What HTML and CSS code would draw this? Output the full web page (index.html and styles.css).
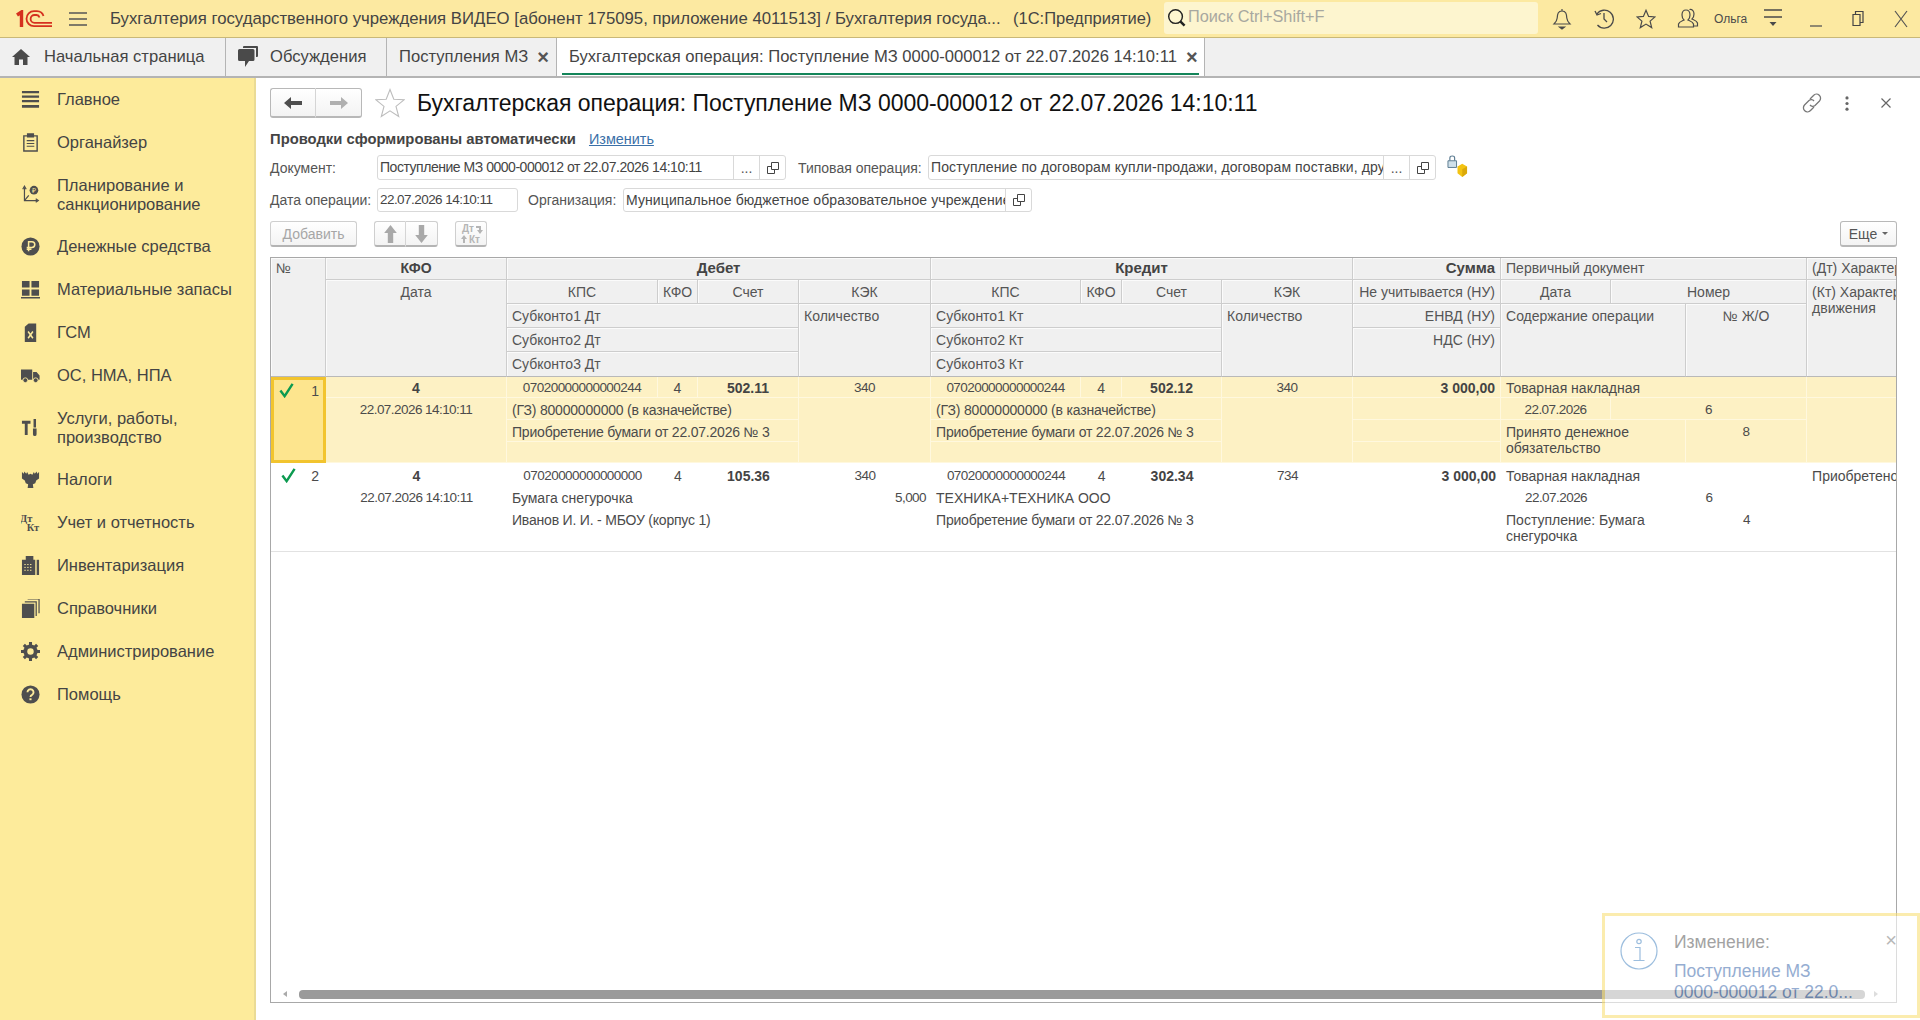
FILE: index.html
```html
<!DOCTYPE html>
<html lang="ru">

<head>
  <meta charset="UTF-8">
  <title>Бухгалтерская операция</title>
  <link rel="stylesheet" href="styles.css">
</head>

<body>
  <header class="topbar">
    <svg class="logo" viewBox="0 0 37 18" fill="none" stroke="#d5301f">
      <path d="M1 5 L5.5 2 V17" stroke-width="3.4" />
      <path d="M36 16.2 H18 A7.2 7.2 0 0 1 18 1.2 H21 A7 7 0 0 1 27.5 6" stroke-width="1.8" />
      <path d="M36 12.8 H18.5 A3.8 3.8 0 0 1 18.5 5 H20.5 A3.4 3.4 0 0 1 23.5 7.4" stroke-width="1.8" />
    </svg>
    <svg class="burger" viewBox="0 0 18 14" stroke="#555" stroke-width="1.4">
      <path d="M0 1 H18 M0 7 H18 M0 13 H18" />
    </svg>
    <div class="app-title">Бухгалтерия государственного учреждения ВИДЕО [абонент 175095, приложение 4011513] / Бухгалтерия госуда...</div>
    <div class="app-name">(1С:Предприятие)</div>
    <div class="search">
      <svg viewBox="0 0 20 20" fill="none" stroke="#222" stroke-width="1.5">
        <circle cx="9" cy="9" r="7.2" />
        <path d="M14 14 L18.5 18.5" stroke-width="2.6" />
      </svg>
      <span>Поиск Ctrl+Shift+F</span>
    </div>
    <div class="top-icons">
      <svg class="ti bell" viewBox="0 0 20 22" fill="none" stroke="#4a4a4a" stroke-width="1.2">
        <path d="M10 1 V3 M10 3 C6 3 5.5 6 5.2 10 C5 13 3.5 14.5 2 16 H18 C16.5 14.5 15 13 14.8 10 C14.5 6 14 3 10 3 Z" />
        <path d="M7.5 19 H12.5 L10 21 Z" fill="#4a4a4a" />
      </svg>
      <svg class="ti hist" viewBox="0 0 20 22" fill="none" stroke="#4a4a4a" stroke-width="1.3">
        <path d="M3 6 A9 9 0 1 1 3.5 17" />
        <path d="M1 3 L3 7 L7 5.5" />
        <path d="M10 5 V11 L13 14" />
      </svg>
      <svg class="ti star" viewBox="0 0 20 20" fill="none" stroke="#4a4a4a" stroke-width="1.2">
        <path d="M10 1.2 L12.6 7.4 L19 7.9 L14.1 12.1 L15.7 18.6 L10 15.1 L4.3 18.6 L5.9 12.1 L1 7.9 L7.4 7.4 Z" />
      </svg>
      <svg class="ti user" viewBox="0 0 22 22" fill="none" stroke="#4a4a4a" stroke-width="1.2">
        <path d="M9 2 C12 2 13 4.5 13 7 C13 9 12 11 11 12 C13 13 16 14 16.5 16 V19 H1.5 V16 C2 14 5 13 7 12 C6 11 5 9 5 7 C5 4.5 6 2 9 2 Z" />
        <path d="M12.5 1.5 C15.5 1 17 3.5 17 6 C17 8.5 16 10 15 11 C17 12 20 13 20.5 15 V18 H17" />
      </svg>
      <span class="user-name">Ольга</span>
      <svg class="ti more" viewBox="0 0 18 20" stroke="#4a4a4a" stroke-width="1.3">
        <path d="M0 1 H18 M0 8 H18" />
        <path d="M5.5 13 H12.5 L9 17 Z" fill="#4a4a4a" stroke="none" />
      </svg>
      <svg class="ti win-min" viewBox="0 0 12 20" stroke="#555" stroke-width="1.3">
        <path d="M0 17 H12" />
      </svg>
      <svg class="ti win-max" viewBox="0 0 12 16" fill="none" stroke="#444" stroke-width="1.2">
        <path d="M1 4 H8 V15 H1 Z M3.5 4 V1 H11 V12 H8" />
      </svg>
      <svg class="ti win-close" viewBox="0 0 14 18" stroke="#555" stroke-width="1.2">
        <path d="M1 1 L13 17 M13 1 L1 17" />
      </svg>
    </div>
  </header>

  <nav class="tabs">
    <div class="tab tab-home">
      <svg viewBox="0 0 18 16" fill="#4a4a4a">
        <path d="M9 0 L18 8 H15.5 V16 H11 V10.5 H7 V16 H2.5 V8 H0 Z" />
      </svg>
      Начальная страница
    </div>
    <div class="tab tab-talk">
      <svg viewBox="0 0 20 22" fill="#4a4a4a">
        <path d="M6 0 H19 Q20 0 20 1 V10 Q20 11 19 11 H18 V2 H5 V1 Q5 0 6 0 Z" />
        <path d="M1.5 3 H15 Q16.5 3 16.5 4.5 V13.5 Q16.5 15 15 15 H11 L7 21 V15 H1.5 Q0 15 0 13.5 V4.5 Q0 3 1.5 3 Z" />
      </svg>
      Обсуждения
    </div>
    <div class="tab tab-arrivals">Поступления МЗ<span class="tab-x">×</span></div>
    <div class="tab tab-active">Бухгалтерская операция: Поступление МЗ 0000-000012 от 22.07.2026 14:10:11<span class="tab-x">×</span></div>
  </nav>

  <div class="main">
    <aside class="sidebar">
      <a class="nav-item">
        <svg viewBox="0 0 20 20" fill="#4e4e4e"><path d="M1 1 H19 V3.4 H1 Z M1 5.8 H19 V8.2 H1 Z M1 10.6 H19 V13 H1 Z M1 15.8 H19 V18.8 H1 Z" /></svg>
        Главное
      </a>
      <a class="nav-item">
        <svg viewBox="0 0 20 20" fill="none" stroke="#4e4e4e" stroke-width="1.5"><path d="M3 3 H17 V19 H3 Z" /><path d="M7 1 H13 V4 H7 Z" fill="#4e4e4e" /><path d="M6 8 H14 M6 11 H14 M6 14 H14" stroke-width="1.2" /></svg>
        Органайзер
      </a>
      <a class="nav-item nav-two">
        <svg viewBox="0 0 20 22" fill="none" stroke="#4e4e4e" stroke-width="1.4"><path d="M3 3 V18 H18" /><path d="M1 5 L3 1.5 L5 5 M16 16 L19 18 L16 20 M3 18 L8 12" /><circle cx="14" cy="6" r="5" fill="#4e4e4e" stroke="none" /><text x="14" y="9" text-anchor="middle" font-size="8" font-family="Liberation Sans" fill="#fdeb9b" stroke="none">₽</text></svg>
        Планирование и<br>санкционирование
      </a>
      <a class="nav-item">
        <svg viewBox="0 0 20 20"><circle cx="10" cy="10" r="9.5" fill="#4e4e4e" /><path d="M8 15 V5 H11.5 A3 3 0 0 1 11.5 11 H6 M6 13 H11" fill="none" stroke="#fdeb9b" stroke-width="1.6" /></svg>
        Денежные средства
      </a>
      <a class="nav-item">
        <svg viewBox="0 0 20 20" fill="#4e4e4e"><path d="M1 1 H9 V8 H1 Z M11 1 H19 V8 H11 Z M1 10 H9 V16.5 H1 Z M11 10 H19 V16.5 H11 Z M0 18 H20 V19.5 H0 Z" /></svg>
        Материальные запасы
      </a>
      <a class="nav-item">
        <svg viewBox="0 0 20 20"><path d="M4 4 L8 0.5 H16 V20 H4 Z" fill="#4e4e4e" /><path d="M7.5 9 L12.5 16 M12.5 9 L7.5 16" stroke="#fdeb9b" stroke-width="1.6" /></svg>
        ГСМ
      </a>
      <a class="nav-item">
        <svg viewBox="0 0 22 18" fill="#4e4e4e"><path d="M0 2 H13 V14 H0 Z M14 5 H18 L21.5 9 V14 H14 Z" /><circle cx="5" cy="14.5" r="2.8" stroke="#fdeb9b" /><circle cx="17" cy="14.5" r="2.8" stroke="#fdeb9b" /></svg>
        ОС, НМА, НПА
      </a>
      <a class="nav-item nav-two">
        <svg viewBox="0 0 20 20" fill="#4e4e4e"><path d="M1 3 H10 V6 H7 V18 H4 V6 H1 Z" /><path d="M13.2 1 H15.8 V10 H13.2 Z M12.6 11 H16.4 V17 Q16.4 19 14.5 19 Q12.6 19 12.6 17 Z" /></svg>
        Услуги, работы,<br>производство
      </a>
      <a class="nav-item">
        <svg viewBox="0 0 20 20" fill="#4e4e4e"><path d="M1 2 L3 4 L3.5 1.5 L5.5 4 L6.5 2 L8 5 L10 4 L12 5 L13.5 2 L14.5 4 L16.5 1.5 L17 4 L19 2 L19 9 L16 11 L15 14 L12.5 15 L13 19 H7 L7.5 15 L5 14 L4 11 L1 9 Z" /></svg>
        Налоги
      </a>
      <a class="nav-item">
        <svg viewBox="0 0 20 20" fill="#4e4e4e" font-family="Liberation Serif" font-weight="bold" font-size="11"><text x="-1" y="9">Дт</text><text x="6" y="19">Кт</text></svg>
        Учет и отчетность
      </a>
      <a class="nav-item">
        <svg viewBox="0 0 20 20" fill="#4e4e4e"><path d="M5 0 H13 V4 H15 V20 H1 V4 H5 Z" /><path d="M16.5 4 H19 V20 H16.5 Z" /><path d="M3.5 9 H12.5 M3.5 12 H12.5 M3.5 15 H12.5" stroke="#fdeb9b" stroke-dasharray="1.5 1.5" /></svg>
        Инвентаризация
      </a>
      <a class="nav-item">
        <svg viewBox="0 0 20 20"><path d="M1 5 H14 V20 H1 Z" fill="#4e4e4e" /><path d="M16 18 V3 H4 M19 15 V0 H7" fill="none" stroke="#4e4e4e" stroke-width="1.3" /></svg>
        Справочники
      </a>
      <a class="nav-item">
        <svg viewBox="0 0 20 20"><circle cx="10" cy="10" r="5.5" fill="none" stroke="#4e4e4e" stroke-width="4" /><path d="M10 0 V20 M0 10 H20 M3 3 L17 17 M17 3 L3 17" stroke="#4e4e4e" stroke-width="3.2" /><circle cx="10" cy="10" r="3.4" fill="#fdeb9b" /></svg>
        Администрирование
      </a>
      <a class="nav-item">
        <svg viewBox="0 0 20 20"><circle cx="10" cy="10" r="9.5" fill="#4e4e4e" /><path d="M6.8 7.6 A3.2 3.2 0 1 1 11.6 10.4 Q10 11.2 10 12.6" fill="none" stroke="#fdeb9b" stroke-width="2" /><path d="M8.9 14 H11.1 V16 H8.9 Z" fill="#fdeb9b" /></svg>
        Помощь
      </a>
    </aside>

    <section class="content">
      <div class="title-row">
        <div class="btn-group nav-btns">
          <button class="btn btn-icon">
            <svg viewBox="0 0 18 12" fill="#4e4e4e"><path d="M0 6 L7 0 V4 H18 V8 H7 V12 Z" /></svg>
          </button>
          <button class="btn btn-icon">
            <svg viewBox="0 0 18 12" fill="#b0b0b0"><path d="M18 6 L11 0 V4 H0 V8 H11 V12 Z" /></svg>
          </button>
        </div>
        <svg class="fav" viewBox="0 0 30 30" fill="none" stroke="#bdbdbd" stroke-width="1.1">
          <path d="M15 1.5 L18.8 11.2 L29 11.8 L21 18.4 L23.7 28.5 L15 22.8 L6.3 28.5 L9 18.4 L1 11.8 L11.2 11.2 Z" />
        </svg>
        <h1 class="title">Бухгалтерская операция: Поступление МЗ 0000-000012 от 22.07.2026 14:10:11</h1>
        <div class="title-tools">
          <svg class="t-link" viewBox="0 0 20 20" fill="none" stroke="#777" stroke-width="1.3">
            <path d="M8 6 L11.5 2.5 A3.5 3.5 0 0 1 17.5 8 L13 12.5 A3.5 3.5 0 0 1 8 12" />
            <path d="M12 14 L8.5 17.5 A3.5 3.5 0 0 1 2.5 12 L7 7.5 A3.5 3.5 0 0 1 12 8" />
          </svg>
          <svg class="t-dots" viewBox="0 0 4 16" fill="#666">
            <circle cx="2" cy="2" r="1.7" />
            <circle cx="2" cy="8" r="1.7" />
            <circle cx="2" cy="14" r="1.7" />
          </svg>
          <svg class="t-close" viewBox="0 0 10 10" stroke="#666" stroke-width="1.2">
            <path d="M0.5 0.5 L9.5 9.5 M9.5 0.5 L0.5 9.5" />
          </svg>
        </div>
      </div>

      <div class="note-row">
        <b>Проводки сформированы автоматически</b>
        <a class="link">Изменить</a>
      </div>

      <div class="form-row">
        <label class="lbl lbl-first">Документ:</label>
        <div class="field f-doc">
          <span class="val val-mixed">Поступление МЗ 0000-000012 от 22.07.2026 14:10:11</span>
          <span class="f-btn">...</span>
          <span class="f-btn"><svg viewBox="0 0 12 12" fill="none" stroke="#444"><path d="M4.5 .5 H11.5 V7.5 H4.5 Z M4.5 4.5 H.5 V11.5 H7.5 V7.5" /></svg></span>
        </div>
        <label class="lbl lbl-oper">Типовая операция:</label>
        <div class="field f-oper">
          <span class="val val-wide">Поступление по договорам купли-продажи, договорам поставки, другим</span>
          <span class="f-btn">...</span>
          <span class="f-btn"><svg viewBox="0 0 12 12" fill="none" stroke="#444"><path d="M4.5 .5 H11.5 V7.5 H4.5 Z M4.5 4.5 H.5 V11.5 H7.5 V7.5" /></svg></span>
        </div>
        <svg class="lock" viewBox="0 0 22 24">
          <path d="M3 6 V3 Q3 1 5.5 1 Q8 1 8 3 V6" fill="none" stroke="#5a7a90" stroke-width="1.2" />
          <path d="M1 6 H10 V13 H1 Z" fill="#cfe0ea" stroke="#5a7a90" />
          <path d="M11 12 L16 9 L21 12 V19 L16 23 L11 19 Z" fill="#f3c312" />
          <path d="M16 15 V23 L21 19 V12 Z" fill="#dba90a" />
        </svg>
      </div>

      <div class="form-row form-row-2">
        <label class="lbl lbl-first">Дата операции:</label>
        <div class="field f-date"><span class="val val-date">22.07.2026 14:10:11</span></div>
        <label class="lbl lbl-org">Организация:</label>
        <div class="field f-org">
          <span class="val val-wide">Муниципальное бюджетное образовательное учреждение средняя</span>
          <span class="f-btn"><svg viewBox="0 0 12 12" fill="none" stroke="#444"><path d="M4.5 .5 H11.5 V7.5 H4.5 Z M4.5 4.5 H.5 V11.5 H7.5 V7.5" /></svg></span>
        </div>
      </div>

      <div class="toolbar">
        <button class="btn btn-add">Добавить</button>
        <div class="btn-group move-btns">
          <button class="btn btn-icon">
            <svg viewBox="0 0 14 20" fill="#a9a9a9"><path d="M7 0 L14 9 H10 V20 H4 V9 H0 Z" /></svg>
          </button>
          <button class="btn btn-icon">
            <svg viewBox="0 0 14 20" fill="#a9a9a9"><path d="M7 20 L14 11 H10 V0 H4 V11 H0 Z" /></svg>
          </button>
        </div>
        <button class="btn btn-dtkt">
          <svg viewBox="0 0 24 22" font-family="Liberation Sans" font-weight="bold" font-size="10" fill="#b5b5b5">
            <text x="3" y="9">Дт</text>
            <text x="10" y="20">Кт</text>
            <path d="M17 3 H22 V7 H24 L21 11 L18 7 H20 V5 H17 Z M5 12 L8 16 H6 V20 H4 V16 H2 Z" />
          </svg>
        </button>
        <button class="btn btn-more">Еще <i class="caret"></i></button>
      </div>

      <div class="grid-box">
        <div class="grid-scroll">
          <table class="grid">
            <colgroup>
              <col class="c1"><col class="c2"><col class="c3"><col class="c4"><col class="c5">
              <col class="c6"><col class="c7"><col class="c8"><col class="c9"><col class="c10">
              <col class="c11"><col class="c12"><col class="c13"><col class="c14"><col class="c15">
            </colgroup>
            <thead>
              <tr class="h1">
                <th rowspan="5" class="l">№</th>
                <th class="b caps">КФО</th>
                <th colspan="4" class="b">Дебет</th>
                <th colspan="4" class="b">Кредит</th>
                <th class="b r">Сумма</th>
                <th colspan="3" class="l">Первичный документ</th>
                <th class="l">(Дт) Характеристика</th>
              </tr>
              <tr class="h2">
                <th rowspan="4">Дата</th>
                <th>КПС</th><th>КФО</th><th>Счет</th><th>КЭК</th>
                <th>КПС</th><th>КФО</th><th>Счет</th><th>КЭК</th>
                <th class="r">Не учитывается (НУ)</th>
                <th>Дата</th>
                <th colspan="2">Номер</th>
                <th rowspan="4" class="l">(Кт) Характеристика<br>движения</th>
              </tr>
              <tr class="h3">
                <th colspan="3" class="l">Субконто1 Дт</th>
                <th rowspan="3" class="l">Количество</th>
                <th colspan="3" class="l">Субконто1 Кт</th>
                <th rowspan="3" class="l">Количество</th>
                <th class="r">ЕНВД (НУ)</th>
                <th colspan="2" rowspan="3" class="l">Содержание операции</th>
                <th rowspan="3">№ Ж/О</th>
              </tr>
              <tr class="h3">
                <th colspan="3" class="l">Субконто2 Дт</th>
                <th colspan="3" class="l">Субконто2 Кт</th>
                <th rowspan="2" class="r">НДС (НУ)</th>
              </tr>
              <tr class="h3 h-last">
                <th colspan="3" class="l">Субконто3 Дт</th>
                <th colspan="3" class="l">Субконто3 Кт</th>
              </tr>
            </thead>
            <tbody class="rec rec-active">
              <tr class="r1">
                <td rowspan="4" class="num-cell">
                  <div class="num">
                    <svg class="ok" viewBox="0 0 16 16" fill="none" stroke="#0c9a50" stroke-width="2.6"><path d="M1.5 8 L6 14 L14.5 1" /></svg>
                    <span>1</span>
                  </div>
                </td>
                <td class="c b">4</td>
                <td class="c d">07020000000000244</td><td class="c">4</td><td class="c b">502.11</td><td class="c d">340</td>
                <td class="c d">07020000000000244</td><td class="c">4</td><td class="c b">502.12</td><td class="c d">340</td>
                <td class="r b">3 000,00</td>
                <td colspan="3">Товарная накладная</td>
                <td></td>
              </tr>
              <tr class="r2">
                <td rowspan="3" class="c d">22.07.2026 14:10:11</td>
                <td colspan="3" class="m">(ГЗ) 80000000000 (в казначействе)</td>
                <td rowspan="3"></td>
                <td colspan="3" class="m">(ГЗ) 80000000000 (в казначействе)</td>
                <td rowspan="3"></td>
                <td></td>
                <td class="c d">22.07.2026</td>
                <td colspan="2" class="c d">6</td>
                <td rowspan="3"></td>
              </tr>
              <tr class="r3">
                <td colspan="3" class="m">Приобретение бумаги от 22.07.2026 № 3</td>
                <td colspan="3" class="m">Приобретение бумаги от 22.07.2026 № 3</td>
                <td></td>
                <td colspan="2" rowspan="2" class="wrap">Принято денежное обязательство</td>
                <td rowspan="2" class="c d">8</td>
              </tr>
              <tr class="r4">
                <td colspan="3"></td>
                <td colspan="3"></td>
                <td></td>
              </tr>
            </tbody>
            <tbody class="rec rec-plain">
              <tr class="r1">
                <td rowspan="4" class="num-cell">
                  <div class="num">
                    <svg class="ok" viewBox="0 0 16 16" fill="none" stroke="#0c9a50" stroke-width="2.6"><path d="M1.5 8 L6 14 L14.5 1" /></svg>
                    <span>2</span>
                  </div>
                </td>
                <td class="c b">4</td>
                <td class="c d">07020000000000000</td><td class="c">4</td><td class="c b">105.36</td><td class="c d">340</td>
                <td class="c d">07020000000000244</td><td class="c">4</td><td class="c b">302.34</td><td class="c d">734</td>
                <td class="r b">3 000,00</td>
                <td colspan="3">Товарная накладная</td>
                <td>Приобретено</td>
              </tr>
              <tr class="r2">
                <td rowspan="3" class="c d">22.07.2026 14:10:11</td>
                <td colspan="3">Бумага снегурочка</td>
                <td class="r d">5,000</td>
                <td colspan="3">ТЕХНИКА+ТЕХНИКА ООО</td>
                <td></td>
                <td></td>
                <td class="c d">22.07.2026</td>
                <td colspan="2" class="c d">6</td>
                <td rowspan="3"></td>
              </tr>
              <tr class="r3">
                <td colspan="3" class="m">Иванов И. И. - МБОУ (корпус 1)</td>
                <td rowspan="2"></td>
                <td colspan="3" class="m">Приобретение бумаги от 22.07.2026 № 3</td>
                <td rowspan="2"></td>
                <td rowspan="2"></td>
                <td colspan="2" rowspan="2" class="wrap">Поступление: Бумага снегурочка</td>
                <td rowspan="2" class="c d">4</td>
              </tr>
              <tr class="r4">
                <td colspan="3"></td>
                <td colspan="3"></td>
              </tr>
            </tbody>
          </table>
        </div>
        <div class="hscroll">
          <i class="arrow-l"></i>
          <div class="thumb"></div>
          <i class="arrow-r"></i>
        </div>
      </div>
    </section>
  </div>

  <div class="toast">
    <svg class="toast-icon" viewBox="0 0 38 38" fill="none" stroke="#5b93c9" stroke-width="1.2">
      <circle cx="19" cy="19" r="18" />
      <circle cx="19" cy="9.5" r="2.2" />
      <path d="M15 15.5 H20 V28 M13.5 28.5 H24.5" />
    </svg>
    <div class="toast-body">
      <div class="toast-head">Изменение:</div>
      <a class="toast-link">Поступление МЗ<br>0000-000012 от 22.0...</a>
    </div>
    <span class="toast-x">×</span>
  </div>
</body>

</html>
```

FILE: styles.css
```css
* {
  box-sizing: border-box;
}

html,
body {
  margin: 0;
  height: 1020px;
  overflow: hidden;
}

body {
  display: flex;
  flex-direction: column;
  font-family: "Liberation Sans", Arial, sans-serif;
  font-size: 14px;
  color: #4b4b4b;
  background: #fff;
}

svg {
  display: block;
  flex: none;
}

/* top bar */
.topbar {
  display: flex;
  align-items: center;
  height: 38px;
  flex: none;
  background: #fce9a1;
  border-bottom: 1px solid #c9b878;
}

.logo {
  width: 37px;
  height: 18px;
  margin-left: 16px;
}

.burger {
  width: 18px;
  height: 14px;
  margin-left: 16px;
}

.app-title {
  width: 903px;
  margin-left: 23px;
  font-size: 16.75px;
  color: #444;
  white-space: nowrap;
  overflow: hidden;
}

.app-name {
  width: 151px;
  font-size: 16.5px;
  color: #444;
  white-space: nowrap;
}

.search {
  display: flex;
  align-items: center;
  width: 374px;
  height: 32px;
  margin-top: -2px;
  padding-left: 3px;
  background: #fdf5cf;
  border-radius: 3px;
  color: #a8a8a0;
  font-size: 16.3px;
}

.search svg {
  width: 19px;
  height: 19px;
  margin-right: 2px;
}

.search span {
  margin-top: -3px;
}

.top-icons {
  display: flex;
  align-items: center;
  flex: 1;
}

.ti {
  height: 22px;
}

.bell {
  width: 20px;
  margin-left: 14px;
}

.hist {
  width: 20px;
  margin-left: 22px;
}

.star {
  width: 20px;
  margin-left: 22px;
}

.user {
  width: 22px;
  margin-left: 21px;
}

.user-name {
  width: 40px;
  margin-left: 15px;
  font-size: 12px;
}

.more {
  width: 18px;
  margin-left: 10px;
}

.win-min {
  width: 12px;
  margin-left: 28px;
}

.win-max {
  width: 12px;
  margin-left: 30px;
  height: 17px;
}

.win-close {
  width: 14px;
  margin-left: 30px;
  height: 18px;
}

/* tabs */
.tabs {
  display: flex;
  height: 40px;
  flex: none;
  background: #f0f0f0;
  border-bottom: 2px solid #b4b4b4;
  font-size: 16.6px;
  color: #444;
}

.tab {
  display: flex;
  align-items: center;
  height: 38px;
  border-right: 1px solid #b4b4b4;
  white-space: nowrap;
}

.tab svg {
  width: 18px;
}

.tab-home {
  width: 226px;
  padding-left: 12px;
  gap: 14px;
}

.tab-talk {
  width: 161px;
  padding-left: 12px;
  gap: 12px;
}

.tab-talk svg {
  width: 20px;
  height: 22px;
}

.tab-arrivals {
  width: 170px;
  padding-left: 12px;
}

.tab-active {
  width: 648px;
  padding-left: 12px;
  background: #fff;
  position: relative;
}

.tab-active::after {
  content: "";
  position: absolute;
  left: 5px;
  right: 5px;
  bottom: 1px;
  height: 2px;
  background: #14855a;
}

.tab-x {
  margin-left: 9px;
  font-size: 20px;
  font-weight: bold;
  line-height: 20px;
  color: #555;
}

/* sidebar */
.main {
  display: flex;
  flex: 1;
  min-height: 0;
}

.sidebar {
  width: 256px;
  flex: none;
  background: #fdeb9b;
  border-right: 2px solid #eadb96;
}

.nav-item {
  display: flex;
  align-items: center;
  height: 43px;
  padding-left: 21px;
  gap: 17px;
  font-size: 16.5px;
  line-height: 19px;
  color: #444;
}

.nav-two {
  height: 61px;
}

.nav-item svg {
  width: 19px;
  height: 19px;
}

/* content */
.content {
  flex: 1;
  display: flex;
  flex-direction: column;
  min-width: 0;
  padding: 10px 23px 17px 14px;
}

.title-row {
  display: flex;
  align-items: center;
  height: 30px;
  flex: none;
}

.btn-group {
  display: flex;
}

.btn {
  display: flex;
  align-items: center;
  justify-content: center;
  padding: 0;
  font: inherit;
  color: #a6a6a6;
  background: linear-gradient(#fff, #f3f3f3);
  border: 1px solid #cfcfcf;
  border-bottom: 2px solid #b4b4b4;
  border-radius: 3px;
}

.btn-group .btn:first-child {
  border-radius: 3px 0 0 3px;
  border-right: 1px solid #d5d5d5;
}

.btn-group .btn:last-child {
  border-radius: 0 3px 3px 0;
  border-left: 0;
}

.nav-btns .btn {
  width: 46px;
  height: 30px;
  border-color: #b8b8b8;
}

.nav-btns svg {
  width: 18px;
  height: 12px;
}

.fav {
  width: 30px;
  height: 30px;
  margin-left: 13px;
}

.title {
  margin: 0 0 0 12px;
  font-size: 23px;
  font-weight: normal;
  letter-spacing: -.03px;
  color: #111;
  white-space: nowrap;
}

.title-tools {
  display: flex;
  align-items: center;
  margin-left: auto;
}

.t-link {
  width: 20px;
  height: 20px;
  margin-right: -3px;
}

.t-dots {
  width: 4px;
  height: 15px;
  margin-left: 26px;
}

.t-close {
  width: 10px;
  height: 10px;
  margin: 0 6px 0 32px;
}

.note-row {
  display: flex;
  align-items: center;
  gap: 13px;
  height: 18px;
  margin-top: 12px;
  flex: none;
}

.note-row b {
  font-size: 14.8px;
  color: #444;
}

.link {
  font-size: 14.4px;
  color: #3a70a8;
  text-decoration: underline;
}

.form-row {
  display: flex;
  align-items: center;
  height: 25px;
  margin-top: 7px;
  flex: none;
}

.form-row-2 {
  height: 24px;
  margin-top: 8px;
}

.lbl {
  color: #555;
  white-space: nowrap;
}

.lbl-first {
  width: 107px;
}

.lbl-oper {
  width: 130px;
  margin-left: 12px;
}

.lbl-org {
  width: 95px;
  margin-left: 10px;
}

.field {
  display: flex;
  align-items: stretch;
  height: 100%;
  border: 1px solid #d9d9d9;
  border-radius: 3px;
}

.val {
  flex: 1;
  min-width: 0;
  padding: 0 2px;
  line-height: 22px;
  color: #444;
  white-space: nowrap;
  overflow: hidden;
}

.val-mixed {
  letter-spacing: -.47px;
}

.val-wide {
  letter-spacing: .1px;
}

.val-date {
  font-size: 13.5px;
  letter-spacing: -.55px;
}

.f-btn {
  display: flex;
  align-items: center;
  justify-content: center;
  flex: none;
  width: 26px;
  border-left: 1px solid #d9d9d9;
  color: #555;
}

.f-btn svg {
  width: 12px;
  height: 12px;
}

.f-doc {
  width: 409px;
}

.f-oper {
  width: 508px;
}

.f-date {
  width: 141px;
}

.f-org {
  width: 409px;
}

.lock {
  width: 21px;
  height: 23px;
  margin: -3px 0 0 11px;
}

.toolbar {
  display: flex;
  height: 26px;
  margin-top: 9px;
  flex: none;
}

.btn-add {
  width: 87px;
}

.move-btns {
  margin-left: 17px;
}

.move-btns .btn {
  width: 32px;
}

.move-btns svg {
  width: 13px;
  height: 18px;
}

.btn-dtkt {
  width: 32px;
  margin-left: 17px;
}

.btn-dtkt svg {
  width: 24px;
  height: 22px;
}

.btn-more {
  width: 57px;
  margin-left: auto;
  color: #555;
  gap: 5px;
  border-color: #b8b8b8;
}

.caret {
  width: 0;
  height: 0;
  border: 3px solid transparent;
  border-top: 3px solid #666;
  border-bottom: 0;
}

/* table */
.grid-box {
  display: flex;
  flex-direction: column;
  flex: 1;
  min-height: 0;
  margin-top: 10px;
  border: 1px solid #a8a8a8;
}

.grid-scroll {
  flex: 1;
  min-height: 0;
  overflow: hidden;
}

.grid {
  table-layout: fixed;
  width: 1656px;
  border-collapse: separate;
  border-spacing: 0;
}

.c1 { width: 55px; }
.c2 { width: 181px; }
.c3 { width: 151px; }
.c4 { width: 40px; }
.c5 { width: 101px; }
.c6 { width: 132px; }
.c7 { width: 150px; }
.c8 { width: 41px; }
.c9 { width: 100px; }
.c10 { width: 131px; }
.c11 { width: 148px; }
.c12 { width: 110px; }
.c13 { width: 75px; }
.c14 { width: 121px; }
.c15 { width: 120px; }

.grid th,
.grid td {
  padding: 0 5px;
  overflow: hidden;
  white-space: nowrap;
  line-height: 16px;
  font-size: 14px;
}

.grid th {
  font-weight: normal;
  text-align: center;
  vertical-align: top;
  padding-top: 4px;
  color: #555;
  background: #f0f0f0;
  border-right: 1px solid #cdcdcd;
  border-bottom: 1px solid #cdcdcd;
  box-shadow: inset 1px 1px 0 #fbfbfb;
}

.grid .h1 { height: 22px; }
.grid .h1 th { padding-top: 2px; }
.grid .h2,
.grid .h3 { height: 24px; }
.grid .h-last { height: 25px; }

.grid th.l { text-align: left; }
.grid th.r,
.grid td.r { text-align: right; }
.grid .c { text-align: center; }
.grid .b { font-weight: bold; color: #444; }
.grid th.b { font-size: 15px; }
.grid th.caps { font-size: 14px; }
.grid .wrap { white-space: normal; }

.grid thead tr:last-child th,
.grid th[rowspan] {
  border-bottom: 1px solid #b9b9b9;
}

.grid td {
  color: #4b4b4b;
  vertical-align: top;
  padding-top: 4px;
}

/* digits are narrow in the original, so numeric cells get their own metrics */
.grid td.d {
  font-size: 13.5px;
  letter-spacing: -.55px;
}

.grid td.m {
  letter-spacing: -.2px;
}

.rec .r1 { height: 21px; }
.rec .r2 { height: 22px; }
.rec .r3 { height: 22px; }
.rec .r4 { height: 21px; }

.grid .rec .r1 td {
  padding-top: 3px;
}

.rec-active td {
  background: #fdf1c4;
  border-right: 1px solid #fff8de;
  border-bottom: 1px solid #fff8de;
}

.grid .rec-active .num-cell {
  background: #fde58e;
  border: 3px solid #f2c42e;
  padding: 0;
}

.rec-plain .r1 { height: 23px; }
.rec-plain .r4 { height: 22px; }

.grid .rec-plain .r1 td {
  padding-top: 5px;
}

.rec-plain .r4 td,
.rec-plain td[rowspan] {
  border-bottom: 1px solid #e2e2e2;
}

.num {
  display: flex;
  align-items: flex-start;
  justify-content: space-between;
  padding: 0 2px 0 5px;
  height: 17px;
}

.rec-active .num {
  padding: 0 4px 0 5px;
}

.ok {
  width: 15px;
  height: 15px;
}

.hscroll {
  display: flex;
  align-items: center;
  height: 14px;
  flex: none;
  padding: 0 12px 2px;
}

.thumb {
  width: 1566px;
  height: 9px;
  margin: 0 9px 0 12px;
  background: #9a9a9a;
  border-radius: 4px;
}

.arrow-l {
  width: 0;
  height: 0;
  border: 3px solid transparent;
  border-right: 4px solid #aaa;
  border-left: 0;
}

.arrow-r {
  width: 0;
  height: 0;
  border: 3px solid transparent;
  border-left: 4px solid #aaa;
  border-right: 0;
}

/* notification over the page */
.toast {
  position: absolute;
  right: 0;
  bottom: 2px;
  display: flex;
  width: 318px;
  height: 105px;
  padding: 12px 0 0 15px;
  background: #fff;
  border: 3px solid #f9e07a;
  opacity: .6;
}

.toast-icon {
  width: 38px;
  height: 38px;
  margin-top: 4px;
}

.toast-body {
  margin-left: 16px;
  padding-top: 4px;
  font-size: 17.5px;
}

.toast-head {
  color: #666;
  line-height: 20px;
}

.toast-link {
  display: block;
  margin-top: 9px;
  line-height: 21px;
  color: #4f77b4;
}

.toast-x {
  position: absolute;
  right: 20px;
  top: 14px;
  font-size: 20px;
  line-height: 20px;
  color: #888;
}
```
